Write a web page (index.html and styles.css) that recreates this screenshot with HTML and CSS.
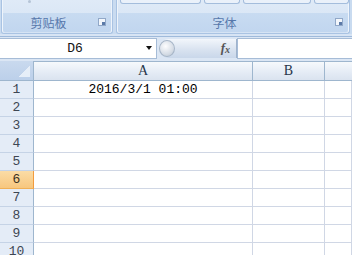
FILE: index.html
```html
<!DOCTYPE html>
<html lang="zh-CN">
<head>
    <meta charset="UTF-8">
    <title>Book1 - Excel</title>
    <link rel="stylesheet" href="styles.css">
</head>
<body>
    <div class="ribbon">
        <div class="group group-clip">
            <div class="group-top"><span class="paste-dot"></span></div>
            <div class="group-label">
                <span class="label-text">剪贴板</span>
                <span class="launcher"></span>
            </div>
        </div>
        <div class="group group-font">
            <div class="group-top">
                <span class="btn btn-font"></span>
                <span class="btn btn-size"></span>
                <span class="btn btn-style"></span>
                <span class="btn btn-color"></span>
            </div>
            <div class="group-label">
                <span class="label-text">字体</span>
                <span class="launcher"></span>
            </div>
        </div>
    </div>

    <div class="formula-bar">
        <div class="name-box">
            <span class="name-text">D6</span>
            <span class="name-arrow"></span>
        </div>
        <div class="fx-pill">
            <span class="knob"></span>
            <span class="fx">f<sub>x</sub></span>
        </div>
        <div class="formula-input"></div>
    </div>

    <div class="sheet">
        <div class="corner"><span class="corner-tri"></span></div>
        <div class="col-head">A</div>
        <div class="col-head">B</div>
        <div class="col-head col-last"></div>

        <div class="row-head">1</div>
        <div class="cell cell-date">2016/3/1 01:00</div>
        <div class="cell"></div>
        <div class="cell"></div>

        <div class="row-head">2</div>
        <div class="cell"></div><div class="cell"></div><div class="cell"></div>
        <div class="row-head">3</div>
        <div class="cell"></div><div class="cell"></div><div class="cell"></div>
        <div class="row-head">4</div>
        <div class="cell"></div><div class="cell"></div><div class="cell"></div>
        <div class="row-head">5</div>
        <div class="cell"></div><div class="cell"></div><div class="cell"></div>
        <div class="row-head row-active">6</div>
        <div class="cell"></div><div class="cell"></div><div class="cell"></div>
        <div class="row-head">7</div>
        <div class="cell"></div><div class="cell"></div><div class="cell"></div>
        <div class="row-head">8</div>
        <div class="cell"></div><div class="cell"></div><div class="cell"></div>
        <div class="row-head">9</div>
        <div class="cell"></div><div class="cell"></div><div class="cell"></div>
        <div class="row-head">10</div>
        <div class="cell"></div><div class="cell"></div><div class="cell"></div>
    </div>
</body>
</html>
```

FILE: styles.css
```css
body {
    margin: 0;
    width: 352px;
    height: 255px;
    overflow: hidden;
    background: #dbe6f4;
    font-family: "Liberation Mono", "Noto Sans CJK SC", monospace;
}

/* ribbon */
.ribbon {
    display: flex;
    gap: 3px;
    height: 34px;
    padding: 0 2px 0 1px;
    background: #c9dbf0;
    border-bottom: 2px solid #d7e4f4;
    box-shadow: 0 1px 0 #9fbadb;
}
.group {
    display: flex;
    flex-direction: column;
    box-sizing: border-box;
    height: 34px;
    border: 1px solid #a9c3e3;
    border-top: none;
    border-radius: 0 0 3px 3px;
    background: linear-gradient(#dfeaf7, #d5e3f4);
    box-shadow: inset 1px 0 0 #eef4fb, inset -1px 0 0 #eef4fb;
}
.group-clip {
    width: 115px;
}
.group-font {
    flex: 1;
}
.group-top {
    display: flex;
    gap: 3px;
    height: 13px;
    padding-left: 3px;
}
.paste-dot {
    width: 3px;
    height: 3px;
    margin: 0 0 0 23px;
    border-radius: 50%;
    background: #b5c4d6;
}
.btn {
    height: 3px;
    border: 1px solid #a4bddc;
    border-top: none;
    border-radius: 0 0 3px 3px;
    background: #eaf1fa;
}
.btn-font { width: 79px; }
.btn-size { width: 34px; }
.btn-style { width: 66px; }
.btn-color { width: 33px; }

.group-label {
    display: flex;
    align-items: center;
    height: 20px;
    margin: 0 1px 1px;
    border-radius: 0 0 2px 2px;
    background: linear-gradient(#c8dbf1, #c1d6ef);
    font-family: "Noto Sans CJK SC", "Liberation Sans", sans-serif;
    font-size: 12px;
    color: #5677ab;
}
.label-text {
    flex: 1;
    text-align: center;
    padding-right: 4px;
}
.launcher {
    position: relative;
    width: 6px;
    height: 6px;
    margin: 0 5px 1px 0;
    border: 1px solid #91a8c8;
    background: #f2f6fb;
}
.launcher::after {
    content: "";
    position: absolute;
    right: 0;
    bottom: 0;
    width: 3px;
    height: 3px;
    background: #5b7aa8;
}

/* formula bar */
.formula-bar {
    display: flex;
    align-items: center;
    height: 22px;
    margin-top: 1px;
}
.name-box {
    display: flex;
    align-items: center;
    box-sizing: border-box;
    width: 157px;
    height: 21px;
    border: 1px solid #a6bcd7;
    border-left: none;
    background: #fff;
}
.name-text {
    flex: 1;
    text-align: center;
    font-size: 13px;
    color: #111;
    padding-left: 4px;
}
.name-arrow {
    width: 0;
    height: 0;
    margin-right: 4px;
    border-left: 3px solid transparent;
    border-right: 3px solid transparent;
    border-top: 4px solid #111;
}
.fx-pill {
    display: flex;
    align-items: center;
    justify-content: space-between;
    box-sizing: border-box;
    width: 78px;
    height: 19px;
    margin-left: 2px;
    border-radius: 10px 0 0 10px;
    border-right: 1px solid #9fb3cc;
    background: linear-gradient(#f2f6fb, #d9e3f0 55%, #c9d7ea);
}
.knob {
    width: 16px;
    height: 17px;
    border-radius: 50%;
    border: 1px solid #a7b6c8;
    box-sizing: border-box;
    background: radial-gradient(circle at 40% 35%, #fdfdfe, #d6dde6 60%, #b7c2cf);
}
.fx {
    margin-right: 6px;
    font-family: "Liberation Serif", serif;
    font-style: italic;
    font-weight: bold;
    font-size: 13px;
    color: #555;
}
.fx sub {
    font-size: 10px;
    vertical-align: -1px;
}
.formula-input {
    flex: 1;
    box-sizing: border-box;
    height: 21px;
    border: 1px solid #a6bcd7;
    border-right: none;
    background: #fff;
}

/* sheet grid */
.sheet {
    display: grid;
    grid-template-columns: 34px 219px 72px 1fr;
    grid-template-rows: 20px;
    grid-auto-rows: 18px;
    margin-top: 2px;
    background: #fff;
}
.sheet > div {
    box-sizing: border-box;
    border-right: 1px solid #d0d7e5;
    border-bottom: 1px solid #d0d7e5;
}
.sheet > .corner {
    position: relative;
    background: linear-gradient(#c9d9ee, #bcd0ea);
    border-right: 1px solid #9eb6ce;
    border-bottom: 1px solid #9eb6ce;
}
.corner-tri {
    position: absolute;
    right: 3px;
    bottom: 3px;
    width: 11px;
    height: 11px;
    background: linear-gradient(to bottom right, transparent 50%, #e6eef8 50%);
}
.sheet > .col-head {
    display: flex;
    align-items: center;
    justify-content: center;
    border-top: 1px solid #9eb6ce;
    border-right: 1px solid #9eb6ce;
    border-bottom: 1px solid #9eb6ce;
    background: linear-gradient(#f6f9fc, #e4ebf5 60%, #dae3ef);
    font-family: "Liberation Serif", serif;
    font-size: 14px;
    color: #27364a;
}
.sheet > .col-last {
    border-right: none;
}
.sheet > .row-head {
    display: flex;
    align-items: center;
    justify-content: center;
    border-right: 1px solid #9eb6ce;
    border-bottom: 1px solid #c5d3e6;
    background: #e4ecf7;
    font-size: 13px;
    color: #3d4653;
}
.sheet > .row-active {
    background: linear-gradient(#fbdca6, #f7c77e);
    border-bottom: 1px solid #f0b056;
    border-right: 1px solid #f29b3e;
    color: #3a3020;
}
.cell {
    font-size: 13px;
    color: #000;
}
.cell-date {
    display: flex;
    align-items: center;
    justify-content: center;
}
```
